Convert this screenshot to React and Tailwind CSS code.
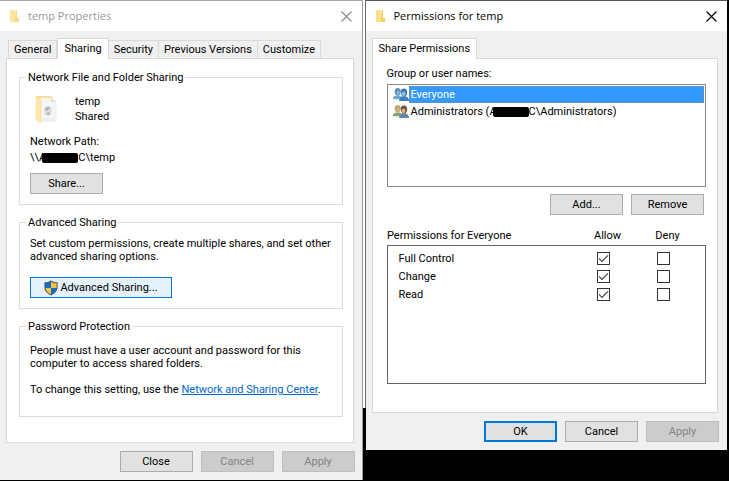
import { clsx } from 'clsx'

function SmallFolder({ className }) {
  return (
    <svg width="12" height="14" viewBox="0 0 12 14" className={className} aria-hidden="true">
      <path d="M2 1h6v12H2z" fill="#ffe8a0" />
      <path d="M8 1h1v8h2v4H7z" fill="#f7cf68" />
      <path d="M2 1l5 1.500v11L2 12.500z" fill="#ffdf87" />
    </svg>
  )
}

function SharedFolder() {
  return (
    <svg width="26" height="30" viewBox="0 0 26 30" aria-hidden="true">
      <path d="M2 2h16v22H2z" fill="#fbdc8c" />
      <path d="M6 4h11l5 4v19H6z" fill="#f5f5f5" stroke="#e8e8e8" strokeWidth="0.6" />
      <path d="M17 4v4h5z" fill="#dcdcdc" />
      <path d="M2 2l5 4v23l-5-3z" fill="#ffe8a8" stroke="#f3d48a" strokeWidth="0.5" />
      <ellipse cx="14" cy="17" rx="4" ry="5" fill="#dce0e2" />
      <path d="M11 15c2-3 4-2 5-1l-2 2-2 1zM12 19l3-1 1 2-2 1z" fill="#aab4b8" />
      <path d="M7 28l13-1.500V24H7z" fill="#efefef" />
    </svg>
  )
}

function Shield() {
  return (
    <svg width="14" height="16" viewBox="0 0 14 16" aria-hidden="true">
      <path d="M7 .5C5 1.800 3 2.300.4 2.300V7c0 4 2.900 6.800 6.600 8.500C10.700 13.800 13.600 11 13.600 7V2.300C11 2.300 9 1.800 7 .5z" fill="#4a5661" />
      <path d="M7 1.700C5.300 2.800 3.600 3.300 1.400 3.400V8H7z" fill="#0f6fd1" />
      <path d="M7 1.700c1.700 1.100 3.400 1.600 5.600 1.700V8H7z" fill="#ffc53a" />
      <path d="M1.500 8H7v6.400C4 13 1.800 11 1.500 8z" fill="#ffc53a" />
      <path d="M12.500 8H7v6.400c3-1.400 5.200-3.400 5.500-6.400z" fill="#0f6fd1" />
    </svg>
  )
}

function People({ back, backBody, front, frontBody, face }) {
  return (
    <svg width="16" height="15" viewBox="0 0 17 15" className="shrink-0" aria-hidden="true">
      <path d="M0 12.500c0-3 1.500-4 5-4s4.500 1 4.500 4z" fill={backBody} />
      <path d="M1.800 4C1.800 1.500 3.100.5 5 .5S8.200 1.500 8.200 4 7 8.800 5 8.800 1.800 6.500 1.800 4z" fill={back} />
      <path d="M4 4.500l2.500-1.200c.8 2.300 0 4.700-1 4.700S3.800 6.500 4 4.500z" fill={face} />
      <path d="M6.500 14.500c0-3.800 2-5 5.200-5s5.300 1.200 5.300 5z" fill={frontBody} />
      <path d="M8.300 4.800C8.300 2.200 9.700 1 11.700 1S15 2.200 15 4.800s-1.300 5.400-3.300 5.400-3.400-2.800-3.400-5.400z" fill={front} />
      <path d="M9.200 5.500l2.600-1.500 1.200 1c.3 2.500-.5 4.500-1.800 4.500s-2-2-2-4z" fill={face} />
    </svg>
  )
}

function TitleBar({ title, inactive }) {
  return (
    <header className="flex h-[30px] items-center bg-white pl-2 pr-2.5">
      <SmallFolder className={clsx('mr-2 shrink-0', inactive && 'opacity-80')} />
      <h1
        className={clsx(
          "grow font-['Open_Sans',sans-serif] text-[11px] leading-4",
          inactive ? 'text-[#999999]' : 'text-black'
        )}
      >
        {title}
      </h1>
      <button type="button" aria-label="Close window" className={inactive ? 'text-[#8a8a8a]' : 'text-black'}>
        <svg width="11" height="11" viewBox="0 0 11 11" stroke="currentColor" strokeWidth="1.1" aria-hidden="true">
          <path d="M.5.5l10 10M10.500.5l-10 10" />
        </svg>
      </button>
    </header>
  )
}

function Tab({ label, active }) {
  return (
    <button
      type="button"
      role="tab"
      aria-selected={!!active}
      className={clsx(
        'border border-b-0 border-[#d9d9d9]',
        active ? '-mb-px h-[21px] bg-white px-1.5 pb-px' : 'h-[18px] bg-[#f0f0f0] px-[5px] not-first:border-l-0'
      )}
    >
      {label}
    </button>
  )
}

function Button({ children, primary, disabled, className }) {
  return (
    <button
      type="button"
      disabled={disabled}
      className={clsx(
        'flex h-[21px] w-[73px] items-center justify-center',
        className,
        primary && 'border-2 border-[#0078d7] bg-[#e1e1e1]',
        disabled && 'border border-[#bfbfbf] bg-[#cccccc] text-[#838383]',
        !primary && !disabled && 'border border-[#adadad] bg-[#e1e1e1]'
      )}
    >
      {children}
    </button>
  )
}

function Group({ title, children }) {
  return (
    <fieldset className="border border-[#dcdcdc] px-2.5">
      <legend className="-ml-1 px-0.5">{title}</legend>
      {children}
    </fieldset>
  )
}

// Blacked out part of a computer name
function Redacted() {
  return <span className="-ml-1 inline-block h-[10px] w-9 rounded-xs bg-black align-middle" />
}

function PropertiesWindow() {
  return (
    <section className="min-w-0 flex-1 border-t border-r border-t-[#a9a9a9] border-r-[#9a9a9a] bg-[#f0f0f0] pb-2">
      <TitleBar title="temp Properties" inactive />
      <div className="pl-1.5 pr-2 pt-[7px]">
        <div role="tablist" className="flex items-end pl-0.5">
          <Tab label="General" />
          <Tab label="Sharing" active />
          <Tab label="Security" />
          <Tab label="Previous Versions" />
          <Tab label="Customize" />
        </div>
        <div className="flex flex-col gap-[11px] border border-[#d9d9d9] bg-white pb-[25px] pl-3 pr-2.5 pt-3">
          <Group title="Network File and Folder Sharing">
            <div className="flex gap-[15px] pl-1 pt-2.5">
              <SharedFolder />
              <p className="leading-[15px]">
                temp
                <br />
                Shared
              </p>
            </div>
            <p className="mt-2.5 leading-4">Network Path:</p>
            <p className="leading-4">
              \\A<Redacted />C\temp
            </p>
            <Button className="mb-2.5 mt-[7px]">Share...</Button>
          </Group>

          <Group title="Advanced Sharing">
            <p className="pt-2">
              Set custom permissions, create multiple shares, and set other
              <br />
              advanced sharing options.
            </p>
            <button
              type="button"
              className="mb-2.5 mt-3.5 flex h-[21px] w-[142px] items-center justify-center gap-0.5 border border-[#0078d7] bg-[#e5f1fb]"
            >
              <Shield />
              Advanced Sharing...
            </button>
          </Group>

          <Group title="Password Protection">
            <p className="pt-[11px]">
              People must have a user account and password for this
              <br />
              computer to access shared folders.
            </p>
            <p className="mb-5 mt-[13px]">
              To change this setting, use the{' '}
              <a href="#network" className="text-[#0066cc] underline">Network and Sharing Center</a>.
            </p>
          </Group>
        </div>
      </div>
      <footer className="flex justify-end gap-2 pr-[7px] pt-2">
        <Button>Close</Button>
        <Button disabled>Cancel</Button>
        <Button disabled>Apply</Button>
      </footer>
    </section>
  )
}

function Check({ label, checked }) {
  return (
    <span className="relative mx-auto block size-[13px]">
      <input
        type="checkbox"
        aria-label={label}
        defaultChecked={checked}
        className="peer block size-[13px] appearance-none border border-[#333333] bg-white"
      />
      <svg
        viewBox="0 0 13 13"
        className="pointer-events-none absolute inset-0 hidden peer-checked:block"
        fill="none"
        stroke="#444444"
        strokeWidth="1.2"
        aria-hidden="true"
      >
        <path d="M2 6.300l3 3 6-6" />
      </svg>
    </span>
  )
}

function PermissionsWindow() {
  const permissions = ['Full Control', 'Change', 'Read']

  return (
    <section className="min-w-0 flex-1 border-t border-t-[#555555] bg-[#f0f0f0] pb-2">
      <TitleBar title="Permissions for temp" />
      <div className="pl-1.5 pr-[9px] pt-[7px]">
        <div role="tablist" className="flex items-end">
          <Tab label="Share Permissions" active />
        </div>
        <div className="border border-[#d9d9d9] bg-white pb-7 pl-3.5 pr-[11px] pt-2">
          <p>Group or user names:</p>
          <ul role="listbox" aria-label="Group or user names" className="mt-1 min-h-[103px] border border-[#828790] py-px pl-[5px] pr-px">
            <li role="option" aria-selected="true" className="flex h-[17px] items-center">
              <People back="#5b93b8" backBody="#6fa9d0" front="#3f74b4" frontBody="#3d7cc0" face="#8dbbe0" />
              <span className="grow border border-dotted border-[#8a8a80] bg-[#3399ff] pl-px leading-[15px] text-white">
                Everyone
              </span>
            </li>
            <li role="option" aria-selected="false" className="flex h-[17px] items-center">
              <People back="#b9a870" backBody="#7fa36b" front="#6e5238" frontBody="#5d87b0" face="#dcb48c" />
              <span className="pl-0.5">
                Administrators (A<Redacted />C\Administrators)
              </span>
            </li>
          </ul>
          <div className="mt-[7px] flex justify-end gap-2 pr-0.5">
            <Button>Add...</Button>
            <Button>Remove</Button>
          </div>

          <table className="mt-3 w-full border-collapse">
            <thead>
              <tr className="h-[18px]">
                <th scope="col" className="text-left font-normal">Permissions for Everyone</th>
                <th scope="col" className="w-[60px] pl-2 font-normal">Allow</th>
                <th scope="col" className="w-[60px] pl-2 font-normal">Deny</th>
                <td className="w-3" />
              </tr>
            </thead>
            <tbody className="border border-[#646464]">
              <tr className="h-1">
                <td colSpan={4} />
              </tr>
              {permissions.map((name) => (
                <tr key={name} className="h-[18px]">
                  <th scope="row" className="pl-[11px] text-left font-normal">{name}</th>
                  <td><Check label={`Allow ${name}`} checked /></td>
                  <td><Check label={`Deny ${name}`} /></td>
                  <td />
                </tr>
              ))}
              <tr className="h-20">
                <td colSpan={4} />
              </tr>
            </tbody>
          </table>
        </div>
      </div>
      <footer className="flex justify-end gap-2 pr-2 pt-2">
        <Button primary>OK</Button>
        <Button>Cancel</Button>
        <Button disabled>Apply</Button>
      </footer>
    </section>
  )
}

export default function App() {
  return (
    <main className="flex min-h-screen items-start bg-black pr-0.5 font-[Roboto,sans-serif] text-[11px] leading-[13px] text-black">
      <PropertiesWindow />
      {/* strip of the window behind */}
      <div className="h-[408px] w-[3px] shrink-0 border-r border-[#6b6b6b] bg-white" />
      <PermissionsWindow />
    </main>
  )
}
